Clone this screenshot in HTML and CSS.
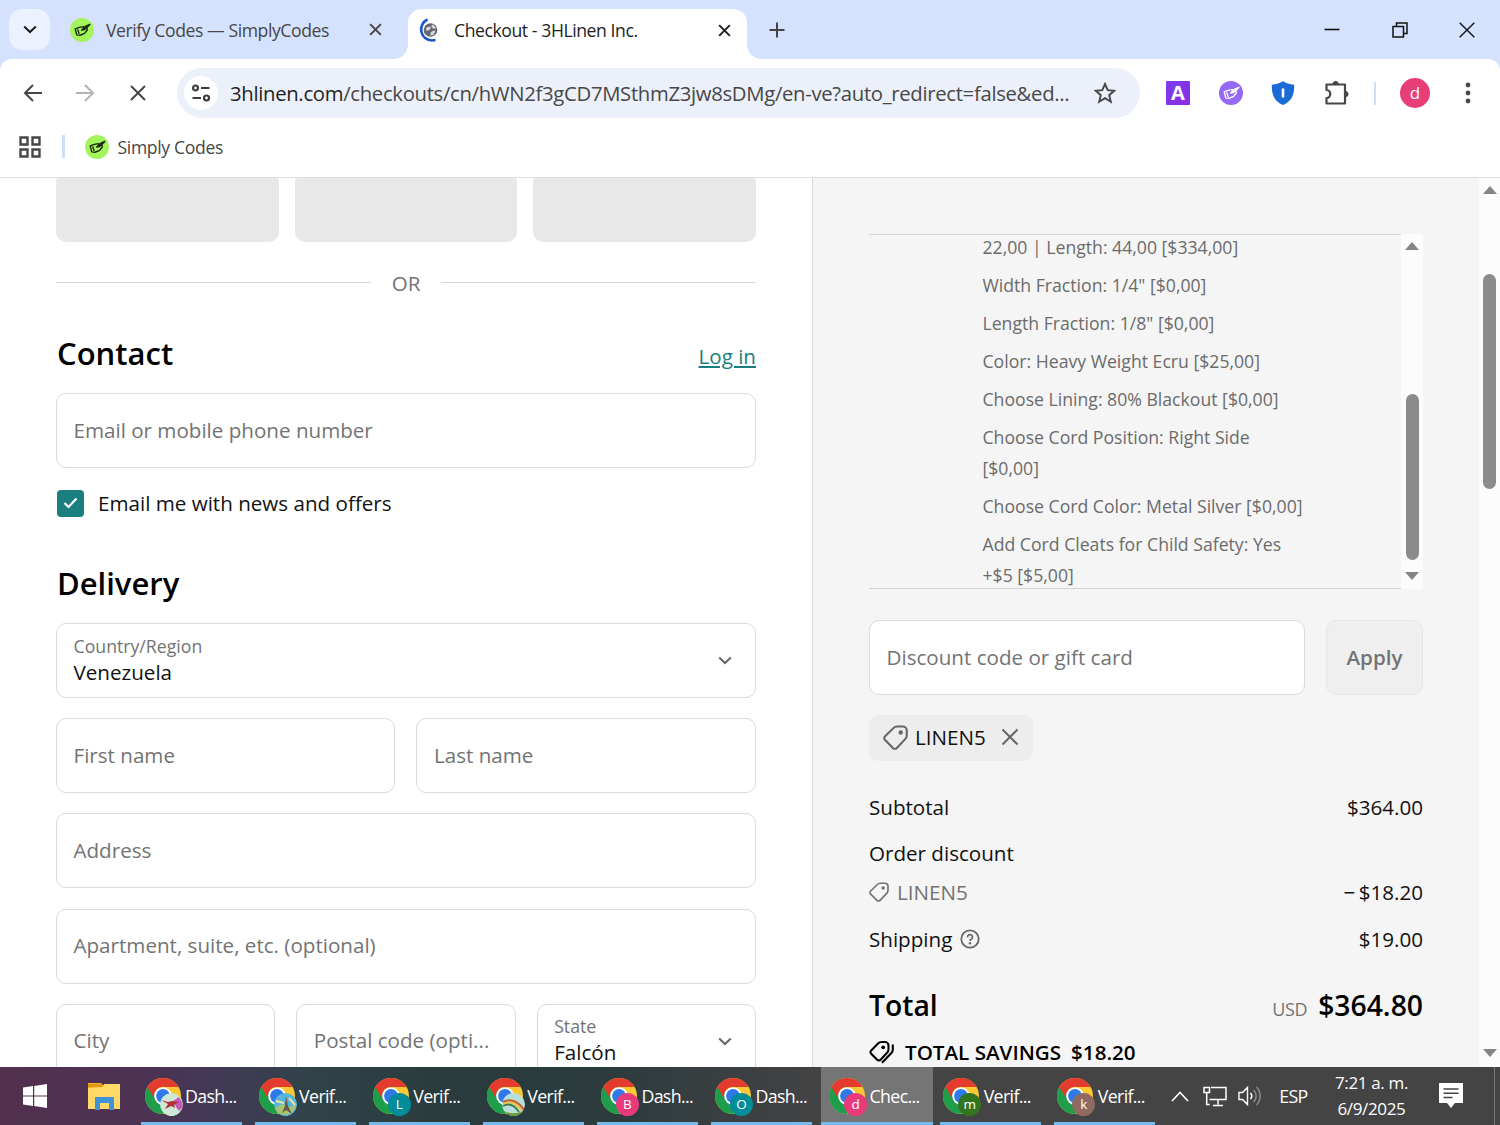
FILE: index.html
```
<!DOCTYPE html>
<html lang="en">
<head>
    <meta charset="UTF-8" />
    <meta name="viewport" content="width=device-width, initial-scale=1" />
    <title>Checkout - 3HLinen Inc.</title>
    <link rel="stylesheet" href="styles.css">
</head>
<body>
    <svg class="sprite" width="0" height="0">
        <symbol id="hand" viewBox="0 0 24 24">
            <path d="M14 7.500L8.500 8.500 3 10.500l2 8 4.500.5 6-2.500 3.500-4.500-.5-3.500 4-4-5.500 2.500-5.500 5 3.500-.5 2-2M6.500 12l1.500 4.500" fill="none" stroke="currentColor" stroke-width="1.900" stroke-linejoin="round" stroke-linecap="round"/>
        </symbol>
        <symbol id="close" viewBox="0 0 14 14">
            <path d="M2 2l10 10M12 2L2 12" fill="none" stroke="currentColor" stroke-width="1.900"/>
        </symbol>
        <symbol id="chevron" viewBox="0 0 14 9">
            <path d="M1.200 1.500L7 7l5.800-5.500" fill="none" stroke="currentColor" stroke-width="2"/>
        </symbol>
        <symbol id="tag" viewBox="0 0 24 24">
            <path d="M13.500 1.500h5.500a3.800 3.800 0 0 1 3.800 3.800v4.700a5 5 0 0 1-1.300 3.300l-8.200 8.700a2.600 2.600 0 0 1-3.800 0L2 14.500a2.600 2.600 0 0 1 0-3.700L10 3A5 5 0 0 1 13.500 1.500z" fill="none" stroke="currentColor" stroke-width="2"/>
            <circle cx="17" cy="7.200" r="2.100" fill="currentColor"/>
        </symbol>
        <symbol id="chrome" viewBox="0 0 36 36">
            <circle cx="18" cy="18" r="18" fill="#fcc934"/>
            <path d="M2.400 9A18 18 0 0 0 18 36l7.800-13.500L18 18z" fill="#1e9e4a"/>
            <path d="M2.400 9A18 18 0 0 1 33.600 9H18a9 9 0 0 0-7.800 13.500z" fill="#e33b2e"/>
            <circle cx="18" cy="18" r="8.800" fill="#fff"/>
            <circle cx="18" cy="18" r="6.900" fill="#3079e8"/>
        </symbol>
    </svg>

    <div class="screen">
        <div class="tabstrip">
            <div class="tab-search"><svg width="14" height="9"><use href="#chevron"/></svg></div>
            <div class="tab">
                <span class="favicon"><svg width="18" height="18"><use href="#hand"/></svg></span>
                <span class="tab-title">Verify Codes — SimplyCodes</span>
                <svg width="15" height="15"><use href="#close"/></svg>
            </div>
            <div class="tab active">
                <svg class="loading" width="24" height="24" viewBox="0 0 24 24">
                    <circle cx="12.500" cy="12" r="6.800" fill="#64686d"/>
                    <path d="M8 10l3-1.500 2 1-1.500 2.500-3 1zM13 8l2-1.500 2.500 2.500v2l-2.500-.5zM12.500 14.500l3-2 2 .5-2 4-3 .5z" fill="#d5d8dc"/>
                    <path d="M9.500 1.500A11 11 0 0 0 14 22.500l3.500-.5" fill="none" stroke="#1a56c9" stroke-width="2.600"/>
                </svg>
                <span class="tab-title">Checkout - 3HLinen Inc.</span>
                <svg width="15" height="15"><use href="#close"/></svg>
            </div>
            <svg class="new-tab" width="16" height="16" viewBox="0 0 16 16"><path d="M8 .5v15M.5 8h15" stroke="#444" stroke-width="2"/></svg>
            <div class="window-buttons">
                <svg width="16" height="16" viewBox="0 0 16 16"><path d="M.5 7.500h15" stroke="#111" stroke-width="1.600"/></svg>
                <svg width="16" height="16" viewBox="0 0 16 16"><path d="M1 4.500h10.500V15H1zM4.500 4V1H15v10.500h-3" fill="none" stroke="#111" stroke-width="1.500"/></svg>
                <svg width="16" height="16" viewBox="0 0 16 16"><path d="M.7.700l14.600 14.600M15.300.700L.7 15.300" stroke="#111" stroke-width="1.400"/></svg>
            </div>
        </div>

        <div class="toolbar">
            <svg class="nav back" width="20" height="20" viewBox="0 0 20 20"><path d="M19 10H2.500M10 2L2 10l8 8" fill="none" stroke="#474747" stroke-width="2"/></svg>
            <svg class="nav forward" width="20" height="20" viewBox="0 0 20 20"><path d="M1 10h16.500M10 2l8 8-8 8" fill="none" stroke="#b3b3b3" stroke-width="2"/></svg>
            <svg class="nav" width="20" height="20" viewBox="0 0 20 20"><path d="M3 3l14 14M17 3L3 17" stroke="#474747" stroke-width="2"/></svg>
            <div class="omnibox">
                <span class="site-info">
                    <svg width="20" height="18" viewBox="0 0 20 18"><g fill="none" stroke="#3c3c3c" stroke-width="2.200"><circle cx="4.500" cy="4" r="2.500"/><path d="M10 4h8.500M1.500 14H10"/><circle cx="15.500" cy="14" r="2.500"/></g></svg>
                </span>
                <span class="url"><b>3hlinen.com</b>/checkouts/cn/hWN2f3gCD7MSthmZ3jw8sDMg/en-ve?auto_redirect=false&amp;ed...</span>
                <svg width="22" height="22" viewBox="0 0 22 22"><path d="M11 2l2.700 6.200 6.500.6-5 4.400 1.600 6.500-5.800-3.500-5.800 3.500 1.600-6.500-5-4.400 6.500-.6z" fill="none" stroke="#474747" stroke-width="1.900"/></svg>
            </div>
            <div class="extensions">
                <span class="ext-a">A</span>
                <span class="ext-hand"><svg width="18" height="18"><use href="#hand"/></svg></span>
                <svg width="24" height="24" viewBox="0 0 24 24"><path d="M12 .3c3 2 6.500 3 11.200 3.500C23.500 13 21 20.500 12 24 3 20.500.5 13 .8 3.800 5.500 3.300 9 2.300 12 .3z" fill="#1b6bd6"/><path d="M12 7.500v9" stroke="#fff" stroke-width="2.600"/></svg>
                <svg width="26" height="26" viewBox="0 0 26 26"><path d="M2.500 4.500h18.500v19H2.500v-5.500c5 0 5-8 0-8z" fill="none" stroke="#474747" stroke-width="2.200" stroke-linejoin="round"/><path d="M9 4a2.600 2.600 0 0 1 5.200 0zM21.500 11.500a2.600 2.600 0 0 1 0 5.200z" fill="#474747" stroke="#474747"/></svg>
            </div>
            <span class="divider"></span>
            <span class="profile">d</span>
            <svg class="menu" width="6" height="22" viewBox="0 0 6 22"><g fill="#474747"><circle cx="3" cy="3" r="2.400"/><circle cx="3" cy="11" r="2.400"/><circle cx="3" cy="19" r="2.400"/></g></svg>
        </div>

        <div class="bookmarks">
            <svg width="22" height="22" viewBox="0 0 22 22"><path d="M1.500 1.500h7v7h-7zM13.500 1.500h7v7h-7zM1.500 13.500h7v7h-7zM13.500 13.500h7v7h-7z" fill="none" stroke="#474747" stroke-width="2.400"/></svg>
            <span class="divider"></span>
            <span class="favicon"><svg width="18" height="18"><use href="#hand"/></svg></span>
            <span class="bookmark-title">Simply Codes</span>
        </div>

        <div class="page">
            <div class="checkout-form">
                <div class="express">
                    <div class="skeleton"></div>
                    <div class="skeleton"></div>
                    <div class="skeleton"></div>
                </div>
                <div class="or-line">OR</div>
                <div class="section-head">
                    <h2>Contact</h2>
                    <a class="login" href="#">Log in</a>
                </div>
                <div class="field">Email or mobile phone number</div>
                <div class="newsletter">
                    <span class="checkbox"><svg width="15" height="12" viewBox="0 0 15 12"><path d="M1.500 6l4 4L13.500 1.500" fill="none" stroke="#fff" stroke-width="2.200"/></svg></span>
                    <span>Email me with news and offers</span>
                </div>
                <h2 class="delivery-title">Delivery</h2>
                <div class="fields">
                    <div class="field select wide">
                        <div><div class="field-label">Country/Region</div><div class="field-value">Venezuela</div></div>
                        <svg width="14" height="9"><use href="#chevron"/></svg>
                    </div>
                    <div class="field half">First name</div>
                    <div class="field half">Last name</div>
                    <div class="field wide">Address</div>
                    <div class="field wide">Apartment, suite, etc. (optional)</div>
                    <div class="field third">City</div>
                    <div class="field third">Postal code (opti...</div>
                    <div class="field select third">
                        <div><div class="field-label">State</div><div class="field-value">Falcón</div></div>
                        <svg width="14" height="9"><use href="#chevron"/></svg>
                    </div>
                </div>
            </div>

            <div class="summary">
                <div class="cart">
                    <div class="cart-lines">
                        <p>22,00 | Length: 44,00 [$334,00]</p>
                        <p>Width Fraction: 1/4" [$0,00]</p>
                        <p>Length Fraction: 1/8" [$0,00]</p>
                        <p>Color: Heavy Weight Ecru [$25,00]</p>
                        <p>Choose Lining: 80% Blackout [$0,00]</p>
                        <p>Choose Cord Position: Right Side<br>[$0,00]</p>
                        <p>Choose Cord Color: Metal Silver [$0,00]</p>
                        <p>Add Cord Cleats for Child Safety: Yes<br>+$5 [$5,00]</p>
                    </div>
                    <div class="scrollbar cart-scroll">
                        <span class="arrow up"></span>
                        <span class="thumb"></span>
                        <span class="arrow down"></span>
                    </div>
                </div>
                <div class="discount">
                    <div class="field">Discount code or gift card</div>
                    <div class="apply">Apply</div>
                </div>
                <div class="chip">
                    <svg width="25" height="25"><use href="#tag"/></svg>
                    <span>LINEN5</span>
                    <svg class="remove" width="18" height="18" viewBox="0 0 18 18"><path d="M1.500 1.500l15 15M16.500 1.500l-15 15" stroke="#666" stroke-width="2"/></svg>
                </div>
                <div class="row subtotal"><span>Subtotal</span><span>$364.00</span></div>
                <div class="row order-discount"><span>Order discount</span></div>
                <div class="row code"><span class="muted"><svg width="20" height="20"><use href="#tag"/></svg>LINEN5</span><span class="negative">− $18.20</span></div>
                <div class="row shipping">
                    <span class="with-icon">Shipping
                        <svg width="20" height="20" viewBox="0 0 20 20"><circle cx="10" cy="10" r="8.700" fill="none" stroke="#666" stroke-width="1.800"/><path d="M7.500 8.200a2.500 2.500 0 1 1 3.800 2.100c-.9.500-1.300.9-1.300 1.700" fill="none" stroke="#666" stroke-width="1.700"/><circle cx="10" cy="14.200" r="1.200" fill="#666"/></svg>
                    </span>
                    <span>$19.00</span>
                </div>
                <div class="row total"><span>Total</span><span class="amount"><small>USD</small>$364.80</span></div>
                <div class="savings">
                    <svg width="26" height="24" viewBox="0 0 26 24"><path d="M12.500 2H16a3.500 3.500 0 0 1 3.500 3.500v4a5 5 0 0 1-1.400 3.300l-6.500 6.900a2.300 2.300 0 0 1-3.400 0L2.200 13.800a2.300 2.300 0 0 1 0-3.300L9 3.500A5 5 0 0 1 12.500 2z" fill="none" stroke="#000" stroke-width="2.100"/><circle cx="14.200" cy="7.300" r="1.900"/><path d="M23.800 4.500v5a5 5 0 0 1-1.400 3.500L13 22.800" fill="none" stroke="#000" stroke-width="2.100"/></svg>
                    <span>TOTAL SAVINGS</span><span>$18.20</span>
                </div>
            </div>

            <div class="scrollbar page-scroll">
                <span class="arrow up"></span>
                <span class="thumb"></span>
                <span class="arrow down"></span>
            </div>
        </div>

        <div class="taskbar">
            <svg class="start" width="24" height="24" viewBox="0 0 24 24"><path d="M0 3.500l10-1.400v9.300H0zM11.200 1.900L24 0v11.400H11.200zM0 12.600h10v9.300L0 20.500zM11.200 12.600H24V24l-12.800-1.900z" fill="#fff"/></svg>
            <svg class="explorer" width="32" height="27" viewBox="0 0 32 27"><path d="M0 0h13l2 2h17v24H0z" fill="#f0b323"/><path d="M0 5l15-1 1-3h16v25H0z" fill="#ffd968"/><path d="M0 1h14v3H0z" fill="#dd9a10"/><path d="M7 27V14h19v13h-5v-7h-9v7z" fill="#3d93d6"/></svg>
            <div class="tasks">
                <div class="task"><span class="app"><svg width="36" height="36"><use href="#chrome"/></svg><svg class="badge" width="23" height="23" viewBox="0 0 23 23"><circle cx="11.500" cy="11.500" r="11.500" fill="#cfe8d6"/><path d="M13 8l6-4 3 5 1 5-4 4-3-4z" fill="#c65bb8"/><path d="M1 7l7 2 4-1 7 1-5 3 1 3-4-2-6 3 3-5z" fill="#b0303c"/></svg></span>Dash...</div>
                <div class="task"><span class="app"><svg width="36" height="36"><use href="#chrome"/></svg><svg class="badge" width="23" height="23" viewBox="0 0 23 23"><circle cx="11.500" cy="11.500" r="11.500" fill="#55b5dd"/><path d="M1 15l7-4 6 3 8-2a11.500 11.500 0 0 1-19 7z" fill="#a9c470"/><path d="M12 3l2 10 4 8-6-4-4 3 3-7z" fill="#6a5548"/><path d="M2 8l8 2M15 5l6 7" stroke="#f1e3a0" stroke-width="2"/></svg></span>Verif...</div>
                <div class="task"><span class="app"><svg width="36" height="36"><use href="#chrome"/></svg><span class="badge teal">L</span></span>Verif...</div>
                <div class="task"><span class="app"><svg width="36" height="36"><use href="#chrome"/></svg><svg class="badge" width="23" height="23" viewBox="0 0 23 23"><circle cx="11.500" cy="11.500" r="11.500" fill="#b9dfda"/><path d="M2 18a22 22 0 0 0 19 0 11.500 11.500 0 0 1-19 0z" fill="#6f9a35"/><path d="M1 9c8-4 16 0 21 8" fill="none" stroke="#c8602c" stroke-width="2.200"/><path d="M1 11c8-4 14 0 19 7" fill="none" stroke="#e9c74a" stroke-width="2"/><path d="M1 13c7-4 12 0 16 6" fill="none" stroke="#3e7a4c" stroke-width="1.800"/></svg></span>Verif...</div>
                <div class="task"><span class="app"><svg width="36" height="36"><use href="#chrome"/></svg><span class="badge pink">B</span></span>Dash...</div>
                <div class="task"><span class="app"><svg width="36" height="36"><use href="#chrome"/></svg><span class="badge teal">O</span></span>Dash...</div>
                <div class="task current"><span class="app"><svg width="36" height="36"><use href="#chrome"/></svg><span class="badge pink">d</span></span>Chec...</div>
                <div class="task"><span class="app"><svg width="36" height="36"><use href="#chrome"/></svg><span class="badge green">m</span></span>Verif...</div>
                <div class="task"><span class="app"><svg width="36" height="36"><use href="#chrome"/></svg><span class="badge brown">k</span></span>Verif...</div>
            </div>
            <div class="tray">
                <svg width="18" height="11" viewBox="0 0 18 11"><path d="M1 10l8-8.500L17 10" fill="none" stroke="#fff" stroke-width="1.600"/></svg>
                <svg class="network" width="24" height="22" viewBox="0 0 24 22"><path d="M8 2.500h15v12H6.500M15 15v4.500M10 20.500h10M1 2.500h5.500v5H1zM3.700 8v11.500h3" fill="none" stroke="#fff" stroke-width="1.500"/></svg>
                <svg class="sound" width="24" height="22" viewBox="0 0 24 22"><path d="M1 7.500h3.500L9.500 2.500v17L4.500 14.500H1z" fill="none" stroke="#fff" stroke-width="1.400"/><path d="M12.500 8a4.500 4.500 0 0 1 0 6" fill="none" stroke="#fff" stroke-width="1.500"/><path d="M15.500 5a8 8 0 0 1 0 12M18.500 2a13 13 0 0 1 0 18" fill="none" stroke="#8c8c8c" stroke-width="1.500"/></svg>
                <span class="lang">ESP</span>
                <div class="clock">7:21 a. m.<br>6/9/2025</div>
                <svg class="notify" width="24" height="26" viewBox="0 0 24 26"><path d="M0 0h24v20h-8l-4 5-4-5H0z" fill="#fff"/><path d="M4.500 6h15M4.500 10.200h15M4.500 14.400h9" stroke="#444" stroke-width="1.500"/></svg>
            </div>
        </div>
    </div>
</body>
</html>
```
FILE: styles.css
```
* {
    box-sizing: border-box;
}
body {
    margin: 0;
    font-family: "Open Sans", "Noto Sans", sans-serif;
    background: #fff;
    overflow: hidden;
}
svg {
    display: block;
    flex: none;
}
.sprite {
    display: none;
}
.screen {
    width: 1500px;
    height: 1125px;
    display: flex;
    flex-direction: column;
    white-space: nowrap;
}

/* Tabs */
.tabstrip {
    height: 59px;
    background: #d5e2fd;
    display: flex;
    align-items: center;
    padding-left: 9px;
    flex: none;
}
.tab-search {
    width: 41px;
    height: 41px;
    border-radius: 13px;
    background: #ebf1fe;
    display: flex;
    align-items: center;
    justify-content: center;
    color: #1c1c1c;
}
.tab {
    width: 358px;
    display: flex;
    align-items: center;
    padding: 0 25px 0 20px;
    color: #474747;
}
.tab-title {
    font-size: 17.6px;
    letter-spacing: -0.42px;
    flex: 1;
    margin-left: 12px;
}
.tab.active {
    width: 339px;
    height: 50px;
    align-self: flex-end;
    background: #fff;
    border-radius: 14px 14px 0 0;
    padding: 0 15px 8px 10px;
    color: #222;
    position: relative;
}
.tab.active::before,
.tab.active::after {
    content: "";
    position: absolute;
    bottom: 0;
    width: 14px;
    height: 14px;
}
.tab.active::before {
    left: -14px;
    background: radial-gradient(circle at 0 0, #d5e2fd 13.500px, #fff 14px);
}
.tab.active::after {
    right: -14px;
    background: radial-gradient(circle at 100% 0, #d5e2fd 13.500px, #fff 14px);
}
.favicon {
    width: 24px;
    height: 24px;
    border-radius: 50%;
    background: #a4f45b;
    color: #1b2a12;
    display: flex;
    align-items: center;
    justify-content: center;
    flex: none;
}
.new-tab {
    margin-left: 22px;
}
.window-buttons {
    display: flex;
    gap: 51.500px;
    margin-left: auto;
    padding-right: 25px;
}

/* Toolbar */
.toolbar {
    height: 68px;
    display: flex;
    align-items: center;
    padding-left: 23px;
    flex: none;
    background: linear-gradient(#d5e2fd, #d5e2fd) top / 100% 14px no-repeat;
    position: relative;
    z-index: 0;
}
.toolbar::before {
    content: "";
    position: absolute;
    inset: 0;
    background: #fff;
    border-radius: 12px 12px 0 0;
    z-index: -1;
}
.forward {
    margin: 0 33px 0 32px;
}
.omnibox {
    width: 963px;
    height: 50px;
    border-radius: 25px;
    background: #ebf0fa;
    margin-left: 29px;
    display: flex;
    align-items: center;
    padding: 0 24px 0 7px;
}
.site-info {
    width: 34px;
    height: 34px;
    border-radius: 50%;
    background: #fff;
    display: flex;
    align-items: center;
    justify-content: center;
}
.url {
    font-size: 20.3px;
    letter-spacing: -0.31px;
    color: #474747;
    margin-left: 12px;
    padding-bottom: 1px;
    flex: 1;
}
.url b {
    font-weight: 400;
    color: #1f1f1f;
}
.extensions {
    display: flex;
    align-items: center;
    gap: 28.500px;
    margin-left: 26px;
}
.ext-a {
    width: 24px;
    height: 24px;
    background: linear-gradient(135deg, #7d3cf0, #8a2ce2);
    color: #fff;
    font: 700 20px/24px "Open Sans", sans-serif;
    text-align: center;
    border-radius: 1px;
}
.ext-hand {
    width: 24px;
    height: 24px;
    border-radius: 50%;
    background: #9568f5;
    color: #fff;
    display: flex;
    align-items: center;
    justify-content: center;
}
.divider {
    width: 2.500px;
    height: 23px;
    background: #cfdffb;
}
.toolbar .divider {
    margin-left: 24px;
}
.profile {
    width: 30px;
    height: 30px;
    border-radius: 50%;
    background: #e83e78;
    color: #fff;
    font-size: 17px;
    line-height: 29px;
    text-align: center;
    margin-left: 24px;
}
.menu {
    margin-left: 35px;
}

.bookmarks {
    height: 51px;
    border-bottom: 1.500px solid #dedede;
    background: #fff;
    display: flex;
    align-items: center;
    padding: 0 0 11px 19px;
    flex: none;
}
.bookmarks .divider {
    margin: 0 20px 0 21px;
}
.bookmark-title {
    font-size: 17.600px;
    letter-spacing: -0.35px;
    color: #474747;
    margin-left: 9px;
}

/* Checkout page */
.page {
    height: 889px;
    display: flex;
    overflow: hidden;
    flex: none;
    font-size: 20.6px;
    color: #111;
}
.checkout-form {
    width: 812px;
    padding: 0 56px;
    flex: none;
}
.express {
    display: flex;
    gap: 16px;
}
.skeleton {
    flex: 1;
    height: 64px;
    background: #e8e8e8;
    border-radius: 3px 3px 10px 10px;
}
.or-line {
    height: 82px;
    display: flex;
    align-items: center;
    gap: 21px;
    color: #737373;
    padding-bottom: 1px;
}
.or-line::before,
.or-line::after {
    content: "";
    flex: 1;
    height: 1px;
    background: #d6d6d6;
}
h2 {
    margin: 0;
    font-size: 31px;
    line-height: 40px;
    font-weight: 580;
    color: #000;
}
.section-head {
    display: flex;
    justify-content: space-between;
    padding: 9px 0 0 1px;
    height: 69px;
}
.login {
    color: #19807f;
    line-height: 47px;
    text-underline-offset: 2px;
}
.field {
    height: 75px;
    border: 1.500px solid #dadada;
    border-radius: 10px;
    background: #fff;
    color: #737373;
    display: flex;
    align-items: center;
    padding: 0 17px 2px 16.500px;
}
.newsletter {
    display: flex;
    align-items: center;
    gap: 14px;
    height: 28px;
    margin: 21px 0 0 1px;
}
.checkbox {
    width: 27px;
    height: 27px;
    border-radius: 4px;
    background: #19807f;
    display: flex;
    align-items: center;
    justify-content: center;
}
.delivery-title {
    margin: 46px 0 20px 1px;
}
.fields {
    display: grid;
    grid-template-columns: repeat(6, 1fr);
    gap: 20.200px 21px;
}
.wide {
    grid-column: span 6;
}
.half {
    grid-column: span 3;
}
.third {
    grid-column: span 2;
}
.select {
    justify-content: space-between;
    color: #666;
    padding: 0 23px 0 16.500px;
}
.field-label {
    font-size: 17.700px;
    line-height: 24px;
    color: #737373;
    margin-top: -2px;
}
.field-value {
    line-height: 28px;
    color: #111;
}

/* Order summary */
.summary {
    flex: 1;
    background: #f5f5f5;
    border-left: 1.500px solid #dadada;
    padding: 56px 56px 0 56px;
}
.cart {
    display: flex;
    height: 355px;
}
.cart-lines {
    flex: 1;
    overflow: hidden;
    border-top: 1.500px solid #d4d4d4;
    border-bottom: 1.500px solid #d4d4d4;
    padding-left: 113.500px;
    font-size: 17.65px;
    line-height: 30.500px;
    color: #6b6b6b;
}
.cart-lines p {
    margin: 0 0 7.600px;
}
.cart-lines p:first-child {
    margin-top: -3px;
}
.scrollbar {
    width: 22px;
    background: #fcfcfc;
    display: flex;
    flex-direction: column;
    align-items: center;
    flex: none;
}
.thumb {
    width: 13px;
    border-radius: 7px;
    background: #8b8b8b;
}
.arrow {
    border: 7px solid transparent;
}
.arrow.up {
    border-top: 0;
    border-bottom: 8px solid #858585;
}
.arrow.down {
    border-bottom: 0;
    border-top: 8px solid #858585;
}
.cart-scroll {
    padding-top: 8px;
}
.cart-scroll .thumb {
    height: 166px;
    margin: 144px 0 12px;
}
.page-scroll {
    width: 21px;
    padding-top: 8px;
}
.page-scroll .thumb {
    height: 215px;
    margin: 80px 0 560px;
}
.discount {
    display: flex;
    gap: 21px;
    margin-top: 31px;
}
.discount .field {
    flex: 1;
}
.apply {
    width: 97px;
    height: 75px;
    border: 1.500px solid #e6e6e6;
    border-radius: 10px;
    background: #efefef;
    color: #737373;
    font-weight: 600;
    display: flex;
    align-items: center;
    justify-content: center;
    padding-bottom: 2px;
}
.chip {
    width: 164px;
    height: 46px;
    margin-top: 20px;
    border-radius: 9px;
    background: #ededed;
    display: flex;
    align-items: center;
    padding: 0 0 2px 14px;
    gap: 7px;
}
.chip svg {
    color: #666;
}
.chip .remove {
    margin-left: 8px;
}
.row {
    display: flex;
    justify-content: space-between;
    align-items: center;
}
.subtotal {
    height: 32px;
    margin-top: 30px;
}
.order-discount {
    height: 32px;
    margin-top: 14px;
}
.code {
    height: 32px;
    margin-top: 7px;
}
.negative {
    word-spacing: -2px;
}
.muted {
    color: #737373;
    display: flex;
    align-items: center;
    gap: 8px;
}
.shipping {
    height: 32px;
    margin-top: 15px;
}
.with-icon {
    display: flex;
    align-items: center;
    gap: 8px;
}
.total {
    height: 40px;
    margin-top: 30px;
    font-size: 28.300px;
    font-weight: 590;
    color: #000;
}
.amount small {
    font-size: 18px;
    font-weight: 400;
    color: #737373;
    margin-right: 11px;
    letter-spacing: -0.4px;
}
.savings {
    height: 36px;
    margin-top: 9px;
    display: flex;
    align-items: center;
    gap: 10px;
    font-weight: 600;
    color: #000;
}

/* Windows taskbar */
.taskbar {
    height: 58px;
    display: flex;
    align-items: center;
    background: linear-gradient(90deg, #53304f 0, #4c3253 150px, #433956 215px, #2f4348 310px, #293b3c 450px, #2b3b3e 600px, #3e4042 760px, #444 850px);
    color: #fff;
    font-size: 17.800px;
    padding-left: 23px;
    flex: none;
}
.explorer {
    margin-left: 41px;
}
.tasks {
    display: flex;
    gap: 1.600px;
    margin-left: 16px;
    height: 58px;
}
.task {
    width: 112.500px;
    display: flex;
    align-items: center;
    padding: 0 0 1px 8.500px;
    letter-spacing: -0.65px;
    position: relative;
}
.task::after {
    content: "";
    position: absolute;
    left: 5px;
    right: 6.500px;
    bottom: 0;
    height: 3px;
    background: #76b9ed;
}
.task.current {
    background: #757575;
}
.task.current::after {
    left: 0;
    right: 0;
}
.app {
    position: relative;
    margin-right: 4.500px;
}
.badge {
    position: absolute;
    left: 15px;
    top: 15px;
    width: 23px;
    height: 23px;
    border-radius: 50%;
    font-size: 13.500px;
    line-height: 22px;
    text-align: center;
    letter-spacing: 0;
}
.teal { background: #008c99; }
.pink { background: #e8397a; }
.green { background: #33741f; }
.brown { background: #8f6a60; }
.tray {
    flex: 1;
    height: 58px;
    display: flex;
    align-items: center;
    border-right: 1.500px solid #777;
    margin-right: 5px;
    padding-left: 10px;
}
.network {
    margin-left: 14px;
}
.sound {
    margin-left: 11px;
}
.lang {
    margin-left: 17px;
    letter-spacing: -0.7px;
}
.clock {
    width: 80px;
    margin-left: 24px;
    font-size: 17px;
    line-height: 26px;
    letter-spacing: -0.35px;
    text-align: center;
}
.notify {
    margin-left: 28px;
}
```
